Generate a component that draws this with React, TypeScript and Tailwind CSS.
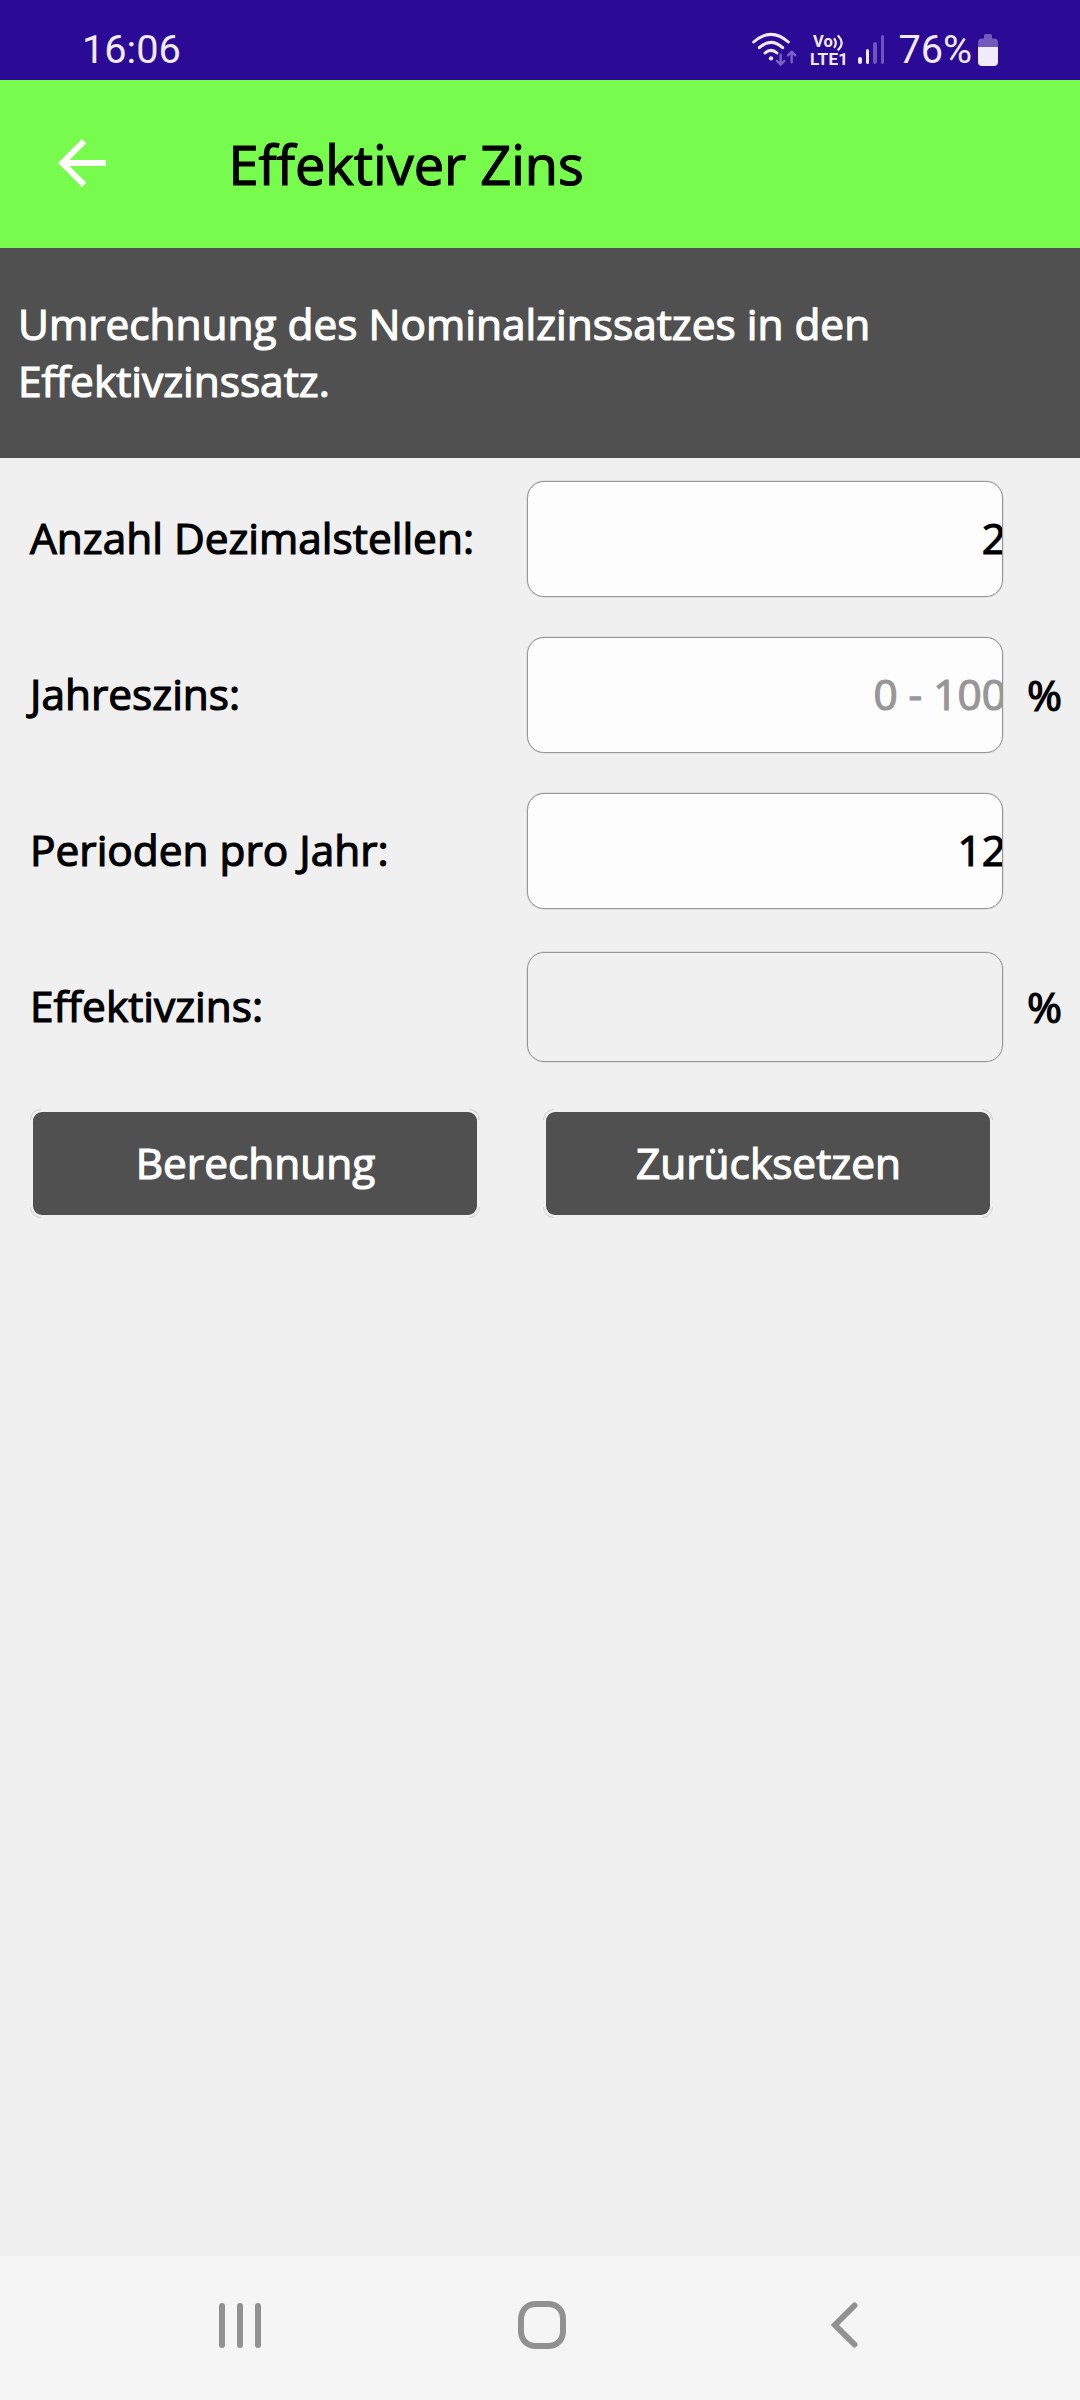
import React from 'react';

const strokeText = '[-webkit-text-stroke:1.2px_currentColor]';

function StatusBar() {
  return (
    <div className="flex h-[80px] items-start bg-[#2b0a95] font-[Roboto,sans-serif] text-[#f0eafc]">
      <span className="ml-[82px] mt-[25.5px] w-[100px] text-[39.7px] leading-[48px]">16:06</span>
      <svg className="ml-[568px] mt-[30px] h-[38px] w-[48px]" viewBox="90 90 144 114" fill="none" strokeLinecap="round" strokeLinejoin="round">
        <g stroke="#f0eafc" strokeWidth="9">
          <path d="M101 126Q153 80 205 126" />
          <path d="M118 143Q153 111 188 143" />
          <path d="M135 159Q153 143 171 159" />
        </g>
        <circle cx="153" cy="175" r="6.5" fill="#f0eafc" />
        <g stroke="#7d63c1" strokeWidth="7">
          <path d="M182 164V193M171 183L182 194L193 183" />
          <path d="M215 187V156M204 166L215 155L226 166" />
        </g>
      </svg>
      <div className="ml-[12px] mt-[33px] flex w-[40px] flex-col font-bold">
        <span className="flex h-[17px] items-center pl-[3px] text-[16.5px] leading-[18px]">
          Vo
          <svg className="mt-[1px] h-[17px] w-[11px]" viewBox="0 0 11 17" fill="none" stroke="currentColor" strokeWidth="2.2" strokeLinecap="round">
            <path d="M1.6 5Q4 9 1.6 13M5.4 2Q12 9 5.4 15.6" />
          </svg>
        </span>
        <span className="h-[17px] text-[17px] leading-[18px] tracking-[0.3px]">LTE1</span>
      </div>
      <div className="ml-[8px] mt-[35px] flex h-[29px] items-end gap-[4px]">
        <i className="h-[7px] w-[3.6px] rounded-full bg-[#f0eafc]" />
        <i className="h-[15px] w-[3.6px] rounded-full bg-[#f0eafc]" />
        <i className="h-[22px] w-[3.6px] rounded-full bg-[#7054bb]" />
        <i className="h-[29px] w-[3.6px] rounded-full bg-[#7054bb]" />
      </div>
      <span className="ml-[14px] mt-[25.5px] w-[76px] text-[39.7px] leading-[48px]">76%</span>
      <svg className="ml-[4px] mt-[34px] h-[32px] w-[20px]" viewBox="0 0 20 32">
        <path d="M6 1.5Q6 0 7.5 0H12.5Q14 0 14 1.5V4.5H16Q20 4.5 20 8.5V13H0V8.5Q0 4.5 4 4.5H6Z" fill="#7359bb" />
        <path d="M0 13H20V28Q20 32 16 32H4Q0 32 0 28Z" fill="#f0eafc" />
      </svg>
    </div>
  );
}

type RowProps = {
  label: string;
  value?: string;
  placeholder?: string;
  unit?: string;
  output?: boolean;
};

function Row({ label, value, placeholder, unit, output }: RowProps) {
  return (
    <div className="flex h-[156px] items-center">
      <span className={`ml-[30px] mt-[-3px] w-[497px] whitespace-nowrap ${strokeText}`}>{label}</span>
      {output ? (
        <div className="mt-[-1px] h-[110px] w-[476px] rounded-[17px] border border-[#979797] shadow-[0_0_0_0.5px_#cfcfcf]" />
      ) : (
        <div className="flex h-[116px] w-[476px] items-center justify-end overflow-hidden rounded-[17px] border border-[#979797] bg-[#fdfdfd] shadow-[0_0_0_0.5px_#cfcfcf]">
          <span className={`mr-[-4px] mt-[-4px] whitespace-nowrap ${strokeText} ${value ? 'text-black' : 'text-[#979797]'}`}>
            {value ?? placeholder}
          </span>
        </div>
      )}
      <span className={`ml-[24px] mt-[-1px] ${strokeText}`}>{unit}</span>
    </div>
  );
}

function ActionButton({ children }: { children: React.ReactNode }) {
  return (
    <div className="relative h-[109px] w-[450px] p-[3px]">
      <i className="absolute left-0 top-0 size-[11px] rounded-tl-[11px] border-l border-t border-[#d4d4d4]" />
      <i className="absolute right-0 top-0 size-[11px] rounded-tr-[11px] border-r border-t border-[#d4d4d4]" />
      <i className="absolute bottom-0 left-0 size-[11px] rounded-bl-[11px] border-b border-l border-[#d4d4d4]" />
      <i className="absolute bottom-0 right-0 size-[11px] rounded-br-[11px] border-b border-r border-[#d4d4d4]" />
      <button className={`relative flex h-full w-full items-center justify-center rounded-[9px] bg-[#505050] pb-[2px] pl-px text-white ${strokeText}`}>{children}</button>
    </div>
  );
}

export default function App() {
  return (
    <div className="flex h-[2400px] w-[1080px] flex-col overflow-hidden bg-[#f0f0f0] font-['Open_Sans',sans-serif] text-[42.4px] leading-[57px] text-black">
      <StatusBar />
      <header className="flex h-[168px] items-center bg-[#77fb4d]">
        <svg className="ml-[46px] mt-[-2px] size-[72px]" viewBox="0 0 24 24" fill="#fff">
          <path d="M20 11H7.83l5.59-5.59L12 4l-8 8 8 8 1.41-1.41L7.83 13H20v-2z" />
        </svg>
        <h1 className={`ml-[110.5px] mt-[-1px] text-[54.1px] leading-[76px] ${strokeText}`}>Effektiver Zins</h1>
      </header>
      <p className={`h-[210px] bg-[#505050] pl-[18px] pt-[47px] text-white ${strokeText}`}>
        Umrechnung des Nominalzinssatzes in den
        <br />
        Effektivzinssatz.
      </p>
      <main className="flex flex-1 flex-col pt-[3px]">
        <Row label="Anzahl Dezimalstellen:" value="2" />
        <Row label="Jahreszins:" placeholder="0 - 100" unit="%" />
        <Row label="Perioden pro Jahr:" value="12" />
        <Row label="Effektivzins:" unit="%" output />
        <div className="ml-[30px] mt-[24px] flex gap-[63px]">
          <ActionButton>Berechnung</ActionButton>
          <ActionButton>Zurücksetzen</ActionButton>
        </div>
      </main>
      <nav className="flex h-[144px] items-center bg-[#f5f5f5]">
        <div className="mb-[6px] ml-[219px] flex gap-[12px]">
          <i className="h-[45px] w-[6px] rounded-full bg-[#919191]" />
          <i className="h-[45px] w-[6px] rounded-full bg-[#919191]" />
          <i className="h-[45px] w-[6px] rounded-full bg-[#919191]" />
        </div>
        <svg className="mb-[6px] ml-[257px] size-[48px]" viewBox="0 0 48 48" fill="none" stroke="#919191" strokeWidth="6">
          <path d="M3 24V19C3 9 9 3 18 3H30C39 3 45 9 45 18V30C45 39 39 45 30 45H18C9 45 3 39 3 30Z" />
        </svg>
        <svg className="mb-[6px] ml-[264px] h-[46px] w-[30px]" viewBox="0 0 30 46" fill="none" stroke="#919191" strokeWidth="6" strokeLinecap="round">
          <path d="M24.5 3.5L5 23L24.5 42.5" />
        </svg>
      </nav>
    </div>
  );
}
